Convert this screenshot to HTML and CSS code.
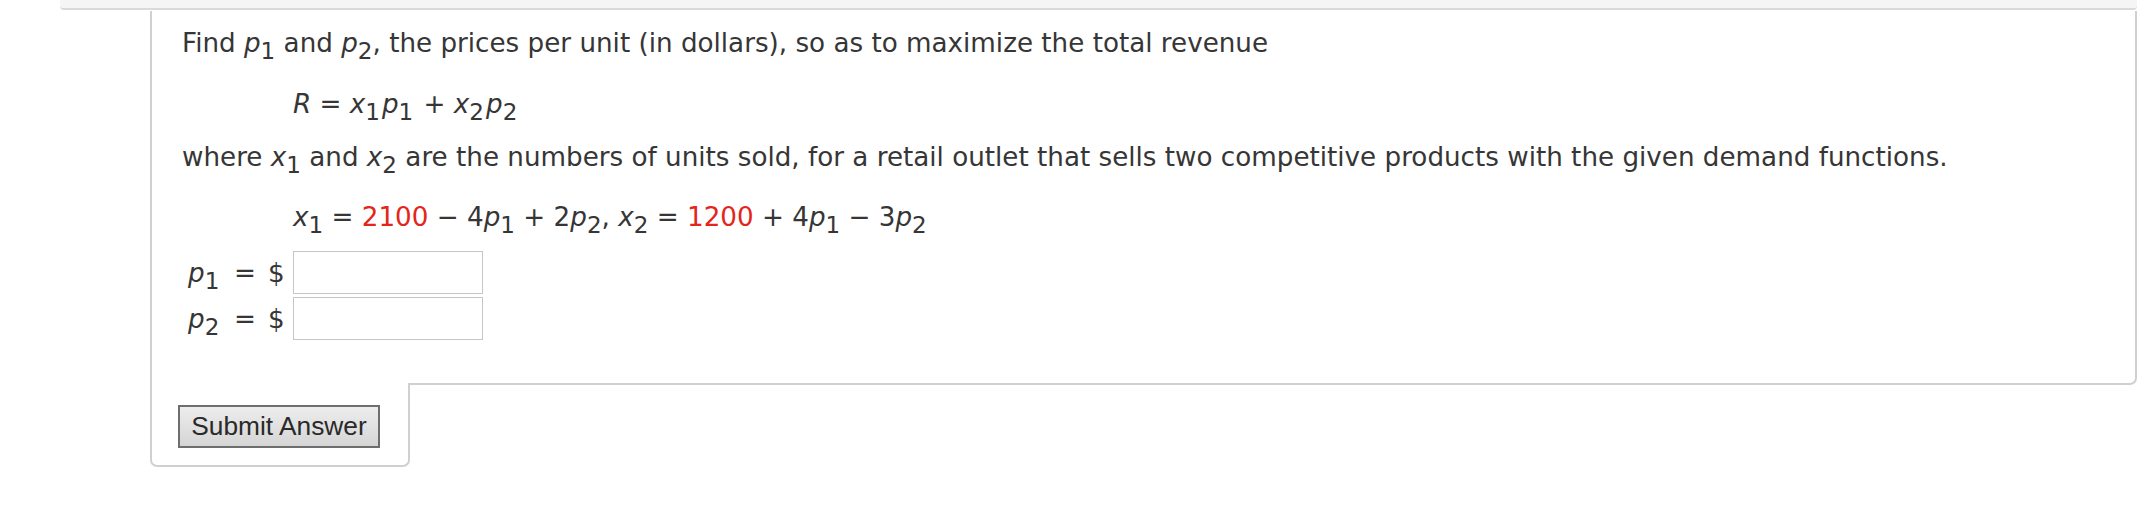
FILE: index.html
```html
<!DOCTYPE html>
<html>
<head>
<meta charset="utf-8">
<link rel="stylesheet" href="styles.css">
</head>
<body>
<div class="topbar"></div>
<div class="card">
  <p class="line first">Find <i>p</i><sub>1</sub> and <i>p</i><sub>2</sub>, the prices per unit (in dollars), so as to maximize the total revenue</p>
  <p class="line eq eq1"><i>R</i> = <i>x</i><sub>1</sub><i>p</i><sub>1</sub> + <i>x</i><sub>2</sub><i>p</i><sub>2</sub></p>
  <p class="line where">where <i>x</i><sub>1</sub> and <i>x</i><sub>2</sub> are the numbers of units sold, for a retail outlet that sells two competitive products with the given demand functions.</p>
  <p class="line eq eq2"><i>x</i><sub>1</sub> = <span class="red">2100</span> − 4<i>p</i><sub>1</sub> + 2<i>p</i><sub>2</sub>, <i>x</i><sub>2</sub> = <span class="red">1200</span> + 4<i>p</i><sub>1</sub> − 3<i>p</i><sub>2</sub></p>
  <div class="answers">
    <div class="row"><span class="lbl"><i>p</i><sub>1</sub></span><span class="eqs">=</span><span class="dollar">$</span><span class="box"></span></div>
    <div class="row"><span class="lbl"><i>p</i><sub>2</sub></span><span class="eqs">=</span><span class="dollar">$</span><span class="box"></span></div>
  </div>
</div>
<div class="tab">
  <button class="submit" type="button">Submit Answer</button>
</div>
</body>
</html>
```

FILE: styles.css
```css
html, body {
  margin: 0;
  padding: 0;
  background: #ffffff;
}

body {
  font-family: "DejaVu Sans", Verdana, sans-serif;
  font-size: 26.2px;
  color: #363636;
  width: 2150px;
}

.topbar {
  margin-left: 60px;
  width: 2077px;
  height: 10px;
  box-sizing: border-box;
  background: #f5f5f5;
  border-bottom: 2px solid #dadada;
  border-bottom-left-radius: 4px;
  border-bottom-right-radius: 4px;
}

.card {
  margin-left: 150px;
  margin-top: 1px;
  width: 1987px;
  box-sizing: border-box;
  border: 2px solid #d0d0d0;
  border-top: none;
  border-bottom-right-radius: 7px;
  padding: 17px 0 43px 30px;
}

.line {
  margin: 0;
  line-height: 30px;
}

.line i, .row i {
  font-style: italic;
}

sub {
  font-size: 88%;
  line-height: 0;
  vertical-align: -0.3em;
}

.eq {
  padding-left: 111px;
}

.eq1 sub {
  margin-right: 2px;
}

.eq1 {
  margin-top: 31px;
}

.where {
  margin-top: 23px;
}

.eq2 {
  margin-top: 30px;
}

.red {
  color: #e3261c;
}

.answers {
  margin-top: 19px;
  display: flex;
  flex-direction: column;
  gap: 3px;
}

.row {
  display: flex;
  align-items: center;
  height: 43px;
  padding-left: 6px;
}

.lbl {
  width: 40px;
}

.eqs {
  margin-left: 6px;
  width: 26px;
}

.dollar {
  margin-left: 8px;
  width: 25px;
}

.box {
  width: 190px;
  height: 43px;
  box-sizing: border-box;
  border: 1px solid #c6c6c6;
  background: #fff;
}

.tab {
  margin-left: 150px;
  margin-top: -2px;
  width: 260px;
  box-sizing: border-box;
  background: #fff;
  border: 2px solid #d0d0d0;
  border-top: none;
  border-bottom-left-radius: 7px;
  border-bottom-right-radius: 7px;
  padding: 22px 0 17px 26px;
  position: relative;
}

.submit {
  display: block;
  width: 202px;
  height: 43px;
  margin: 0;
  padding: 0;
  box-sizing: border-box;
  border: 2px solid #6e6e6e;
  border-radius: 0;
  background: linear-gradient(#ededed, #d5d5d5);
  font-family: "Liberation Sans", Arial, sans-serif;
  font-size: 26.3px;
  color: #2a2a2a;
  line-height: 39px;
}
```
